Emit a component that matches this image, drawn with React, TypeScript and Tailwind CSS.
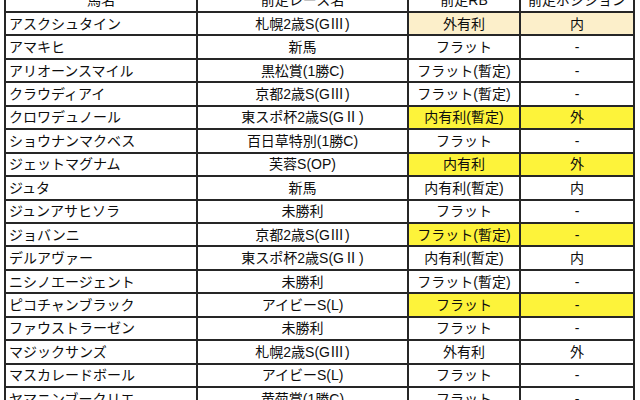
import * as React from "react";

type Row = {
  name: string;
  race: React.ReactNode;
  rb: string;
  pos: string;
  tone?: "beige" | "yellow";
};

// roman numerals sit in a full-width box, like the source font draws them
const g3 = (
  <>
    G<span className="inline-block w-[15px] text-left">Ⅲ</span>
  </>
);
const g2 = (
  <>
    G<span className="inline-block w-[15px] text-left">Ⅱ</span>
  </>
);

const rows: Row[] = [
  { name: "アスクシュタイン", race: <>札幌2歳S({g3})</>, rb: "外有利", pos: "内", tone: "beige" },
  { name: "アマキヒ", race: "新馬", rb: "フラット", pos: "-" },
  { name: "アリオーンスマイル", race: "黒松賞(1勝C)", rb: "フラット(暫定)", pos: "-" },
  { name: "クラウディアイ", race: <>京都2歳S({g3})</>, rb: "フラット(暫定)", pos: "-" },
  { name: "クロワデュノール", race: <>東スポ杯2歳S({g2})</>, rb: "内有利(暫定)", pos: "外", tone: "yellow" },
  { name: "ショウナンマクベス", race: "百日草特別(1勝C)", rb: "フラット", pos: "-" },
  { name: "ジェットマグナム", race: "芙蓉S(OP)", rb: "内有利", pos: "外", tone: "yellow" },
  { name: "ジュタ", race: "新馬", rb: "内有利(暫定)", pos: "内" },
  { name: "ジュンアサヒソラ", race: "未勝利", rb: "フラット", pos: "-" },
  { name: "ジョバンニ", race: <>京都2歳S({g3})</>, rb: "フラット(暫定)", pos: "-", tone: "yellow" },
  { name: "デルアヴァー", race: <>東スポ杯2歳S({g2})</>, rb: "内有利(暫定)", pos: "内" },
  { name: "ニシノエージェント", race: "未勝利", rb: "フラット(暫定)", pos: "-" },
  { name: "ピコチャンブラック", race: "アイビーS(L)", rb: "フラット", pos: "-", tone: "yellow" },
  { name: "ファウストラーゼン", race: "未勝利", rb: "フラット", pos: "-" },
  { name: "マジックサンズ", race: <>札幌2歳S({g3})</>, rb: "外有利", pos: "外" },
  { name: "マスカレードボール", race: "アイビーS(L)", rb: "フラット", pos: "-" },
  { name: "ヤマニンブークリエ", race: "黄菊賞(1勝C)", rb: "フラット", pos: "-" },
];

const cell = "border-2 border-[#262626] h-[23.44px] p-0 leading-none";

export default function App() {
  return (
    <div
      className="w-[640px] h-[400px] overflow-hidden bg-white text-[#0d0d0d] text-[14px]"
      style={{ fontFamily: '"Liberation Sans", "Noto Sans CJK JP", sans-serif' }}
    >
      <table className="ml-[4px] mt-[-12.44px] border-collapse table-fixed w-[629px]">
        <colgroup>
          <col className="w-[192px]" />
          <col className="w-[211px]" />
          <col className="w-[112px]" />
          <col className="w-[114px]" />
        </colgroup>
        <thead>
          <tr>
            <th className={`${cell} font-normal text-center`}>馬名</th>
            <th className={`${cell} font-normal text-center`}>前走レース名</th>
            <th className={`${cell} font-normal text-center`}>前走RB</th>
            <th className={`${cell} font-normal text-center`}>前走ポジション</th>
          </tr>
        </thead>
        <tbody>
          {rows.map((r) => {
            const hl =
              r.tone === "beige"
                ? "bg-[#fcefca]"
                : r.tone === "yellow"
                  ? "bg-[#fdf33a]"
                  : "bg-white";
            return (
              <tr key={r.name}>
                <td className={`${cell} text-left pl-[3px]`}>{r.name}</td>
                <td className={`${cell} text-center`}>{r.race}</td>
                <td className={`${cell} text-center ${hl}`}>{r.rb}</td>
                <td className={`${cell} text-center ${hl}`}>{r.pos}</td>
              </tr>
            );
          })}
        </tbody>
      </table>
    </div>
  );
}
